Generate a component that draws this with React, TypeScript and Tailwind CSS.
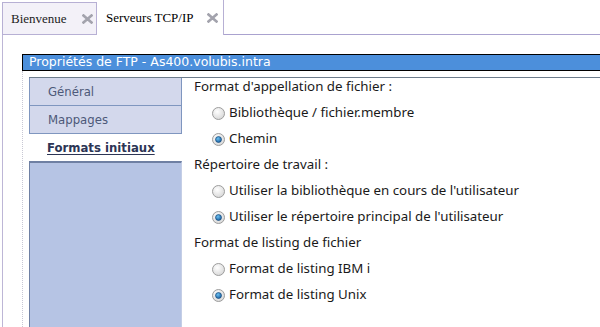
import React from 'react';

function CloseIcon() {
  return (
    <svg width="11" height="10" viewBox="0 0 11 10" className="shrink-0">
      <path d="M1.5 1.5 L9.5 8.5 M9.5 1.5 L1.5 8.5" stroke="#a3a3ad" strokeWidth="2.6" strokeLinecap="square" />
    </svg>
  );
}

function Radio({ checked }: { checked: boolean }) {
  return (
    <svg width="13" height="13" viewBox="0 0 13 13" className="shrink-0">
      <defs>
        <radialGradient id="rg" cx="0.4" cy="0.35" r="0.7">
          <stop offset="0" stopColor="#ffffff" />
          <stop offset="1" stopColor="#d6d6d6" />
        </radialGradient>
        <radialGradient id="dot" cx="0.4" cy="0.35" r="0.7">
          <stop offset="0" stopColor="#6cc0f0" />
          <stop offset="1" stopColor="#145a9c" />
        </radialGradient>
      </defs>
      <circle cx="6.5" cy="6.5" r="6" fill="url(#rg)" stroke="#9d9d9d" strokeWidth="1" />
      {checked && <circle cx="6.5" cy="6.5" r="3" fill="url(#dot)" stroke="#0f3f70" strokeWidth="0.6" />}
    </svg>
  );
}

const groups = [
  {
    title: "Format d'appellation de fichier :",
    options: ['Bibliothèque / fichier.membre', 'Chemin'],
    selected: 1,
  },
  {
    title: 'Répertoire de travail :',
    options: ["Utiliser la bibliothèque en cours de l'utilisateur", "Utiliser le répertoire principal de l'utilisateur"],
    selected: 1,
  },
  {
    title: 'Format de listing de fichier',
    options: ['Format de listing IBM i', 'Format de listing Unix'],
    selected: 1,
  },
];

export default function App() {
  return (
    <div className="w-[600px] h-[327px] bg-white overflow-hidden flex flex-col">
      {/* Tabs */}
      <div className="flex items-end h-[35px] shrink-0">
        <div className="ml-[2px] w-[95px] h-[33px] flex items-center border border-[#b7b0d4] bg-[#f3f1f8] pl-[8px] pr-[5px] gap-[15px]">
          <span className="text-[13px] text-[#222] font-['Liberation_Serif',serif]">Bienvenue</span>
          <CloseIcon />
        </div>
        <div className="w-[127px] h-[35px] flex items-center border-r border-[#b7b0d4] bg-white pl-[9px] gap-[13px]">
          <span className="text-[13px] text-black font-['Liberation_Serif',serif]">Serveurs TCP/IP</span>
          <CloseIcon />
        </div>
        <div className="flex-1 border-b border-[#aaa2cf]" />
      </div>

      {/* Body */}
      <div className="flex-1 ml-[2px] border-l border-[#bdb6d6] pl-[19px] pt-[19px] flex flex-col font-['Liberation_Sans',sans-serif]">
        <div className="h-[17px] border border-r-0 border-black bg-[#4c8fdb] flex items-center pl-[6px] shrink-0">
          <span className="text-[12.5px] leading-none text-white font-['DejaVu_Sans',sans-serif]">
            Propriétés de FTP - As400.volubis.intra
          </span>
        </div>
        <div className="flex-1 border-l border-dotted border-[#c8c8d4] pt-[6px] pl-[6px] flex flex-col">
          <div className="flex-1 flex border-t border-[#6d7c8c]">
            {/* Nav */}
            <div className="w-[153px] flex flex-col font-['DejaVu_Sans_Condensed','DejaVu_Sans',sans-serif] text-[13px]">
              <div className="h-[28px] border border-t-0 border-[#7f96bf] bg-[#d3d8ec] flex items-center pl-[18px] text-[#4d5979]">
                Général
              </div>
              <div className="h-[28px] border border-t-0 border-[#7f96bf] bg-[#d3d8ec] flex items-center pl-[18px] text-[#4d5979]">
                Mappages
              </div>
              <div className="h-[27px] bg-white flex items-center pl-[18px] text-[#2c3555] font-bold underline underline-offset-2">
                Formats initiaux
              </div>
              <div className="flex-1 border-t-2 border-l border-[#6f80a3] bg-[#b6c4e4] border-r border-r-[#c4cee6]" />
            </div>

            {/* Content */}
            <div className="flex-1 pl-[12px] -mt-[4px] flex flex-col text-[13.3px] text-[#1a1a1a] font-['Noto_Sans',sans-serif]">
              {groups.map((g) => (
                <div key={g.title} className="flex flex-col">
                  <div className="h-[26px] flex items-center">{g.title}</div>
                  {g.options.map((o, i) => (
                    <div key={o} className="h-[26px] flex items-center pl-[18px] gap-[4px]">
                      <Radio checked={i === g.selected} />
                      <span>{o}</span>
                    </div>
                  ))}
                </div>
              ))}
            </div>
          </div>
        </div>
      </div>
    </div>
  );
}
